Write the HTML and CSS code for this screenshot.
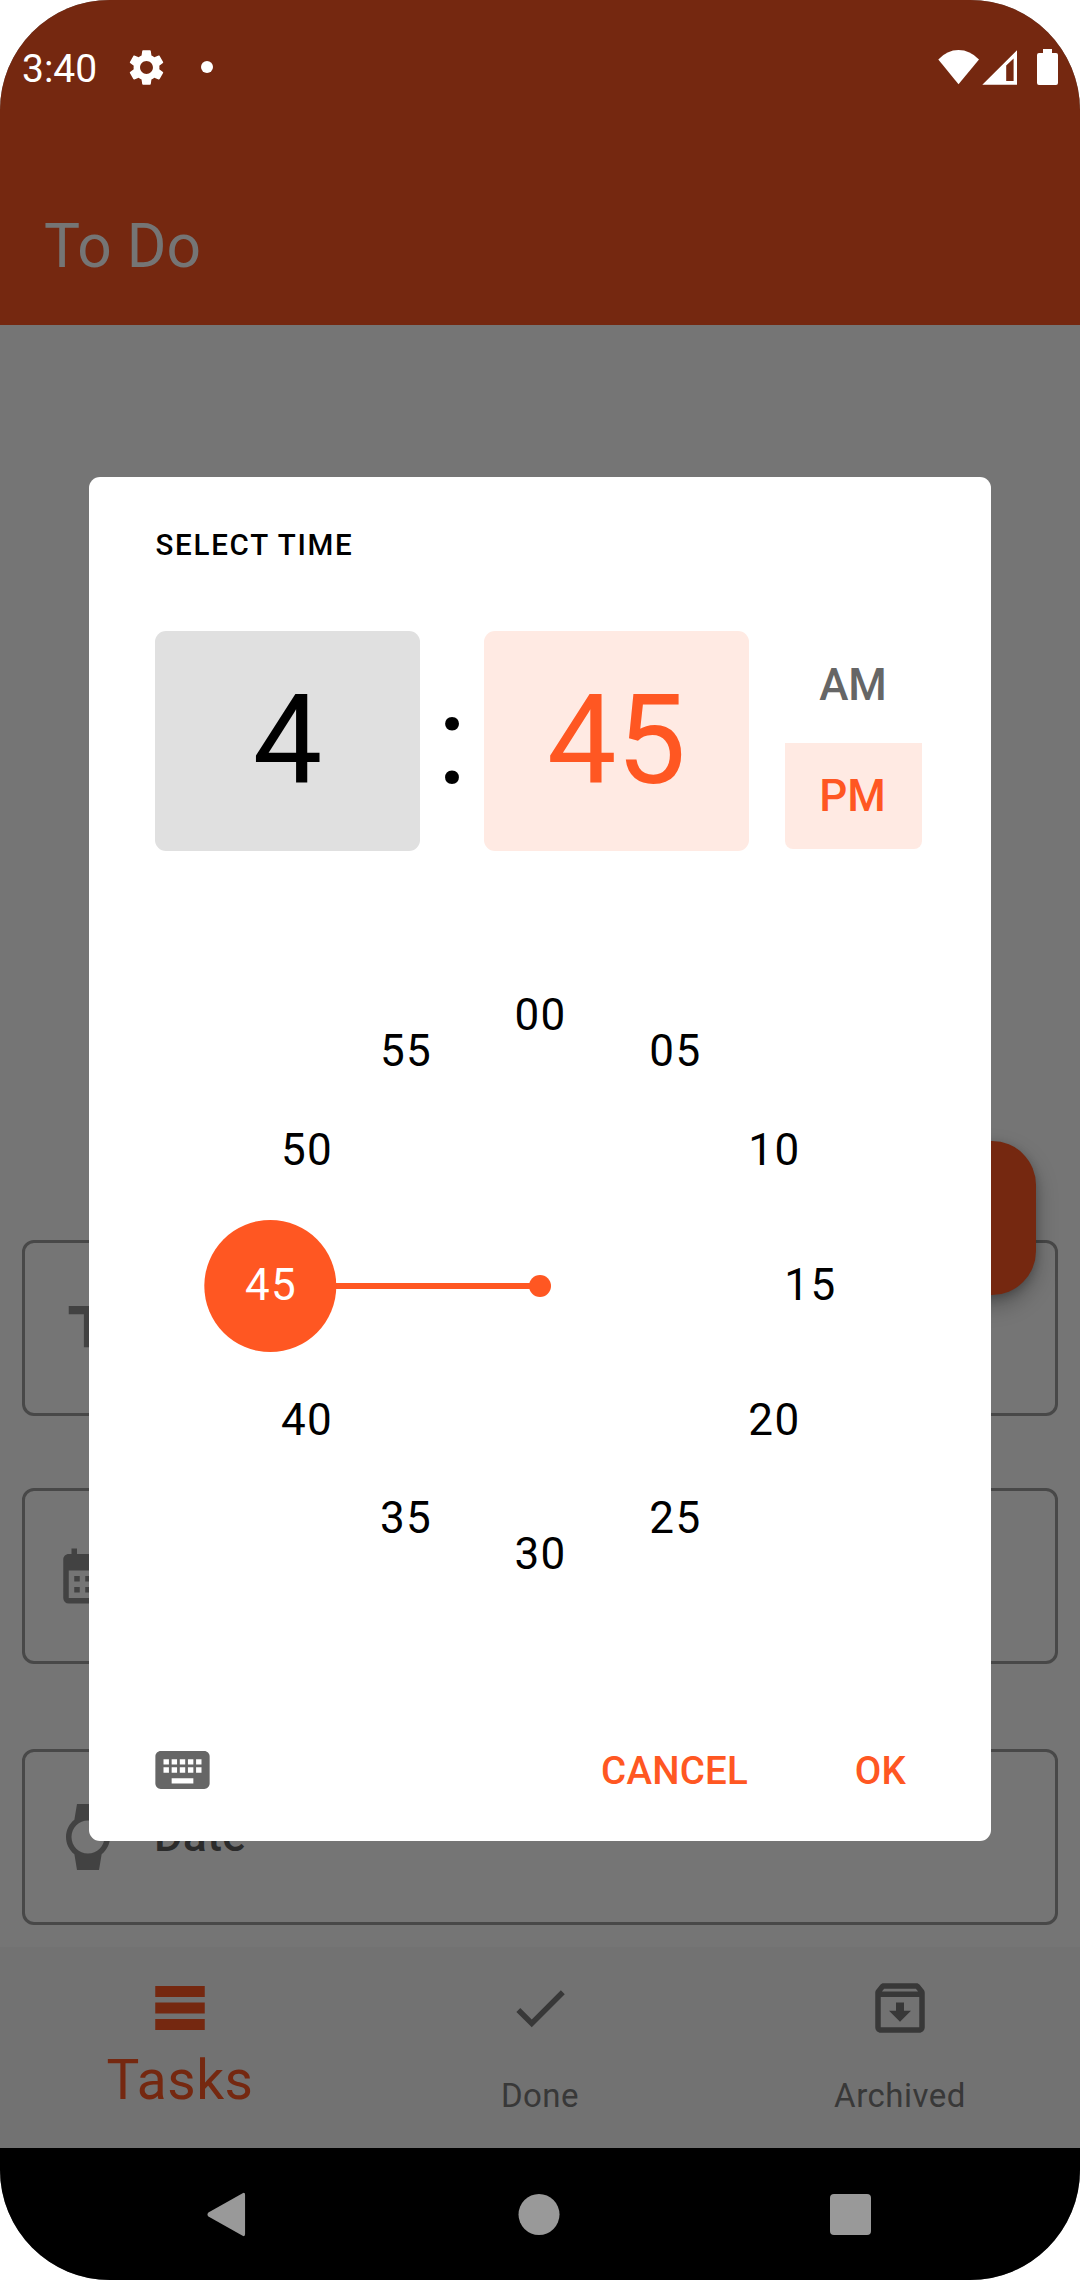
FILE: index.html
```html
<!DOCTYPE html>
<html lang="en">
<head>
<meta charset="utf-8">
<title>To Do</title>
<link rel="stylesheet" href="styles.css">
</head>
<body>
<div class="phone">
  <header class="app-header">
    <div class="status-bar">
      <div class="status-left">
        <span class="clock">3:40</span>
        <svg class="gear" viewBox="0 0 24 24"><path d="M19.14 12.94c.04-.3.06-.61.06-.94 0-.32-.02-.64-.07-.94l2.03-1.58c.18-.14.23-.41.12-.61l-1.92-3.32c-.12-.22-.37-.29-.59-.22l-2.39.96c-.5-.38-1.03-.7-1.62-.94l-.36-2.54c-.04-.24-.24-.41-.48-.41h-3.84c-.24 0-.43.17-.47.41l-.36 2.54c-.59.24-1.13.57-1.62.94l-2.39-.96c-.22-.08-.47 0-.59.22L2.74 8.87c-.12.21-.08.47.12.61l2.03 1.58c-.05.3-.09.63-.09.94s.02.64.07.94l-2.03 1.58c-.18.14-.23.41-.12.61l1.92 3.32c.12.22.37.29.59.22l2.39-.96c.5.38 1.03.7 1.62.94l.36 2.54c.05.24.24.41.48.41h3.84c.24 0 .44-.17.47-.41l.36-2.54c.59-.24 1.13-.56 1.62-.94l2.39.96c.22.08.47 0 .59-.22l1.92-3.32c.12-.22.07-.47-.12-.61l-2.01-1.58zM12 15.6c-1.98 0-3.6-1.62-3.6-3.6s1.62-3.6 3.6-3.6 3.6 1.62 3.6 3.6-1.62 3.6-3.6 3.6z"/></svg>
        <span class="dot"></span>
      </div>
      <svg class="status-right" viewBox="0 0 122 40">
        <path d="M0.3 12.5Q9 3 20.5 3T41 12.5L20.5 37.3Z"/>
        <path fill-rule="evenodd" d="M44.3 37.8L79 3.2V37.8ZM68.2 18.5V34H75.6V11.5Z"/>
        <path d="M101 6h4V2h9v4h4q2 0 2 2v28q0 2-2 2h-17q-2 0-2-2V8q0-2 2-2z"/>
      </svg>
    </div>
    <h1 class="title">To Do</h1>
  </header>

  <main class="sheet">
    <div class="fab"></div>
    <div class="field">
      <svg class="icon" viewBox="0 0 24 24"><path d="M5 4v3h5.5v12h3V7H19V4z"/></svg>
    </div>
    <div class="field">
      <svg class="icon" viewBox="0 0 24 24"><path d="M19 4h-1V2h-2v2H8V2H6v2H5c-1.11 0-1.99.9-1.99 2L3 20a2 2 0 0 0 2 2h14c1.1 0 2-.9 2-2V6c0-1.1-.9-2-2-2zm0 16H5V10h14v10zM9 14H7v-2h2v2zm4 0h-2v-2h2v2zm4 0h-2v-2h2v2zm-8 4H7v-2h2v2zm4 0h-2v-2h2v2zm4 0h-2v-2h2v2z"/></svg>
    </div>
    <div class="field">
      <svg class="icon" viewBox="0 0 24 24"><path d="M20 12c0-2.54-1.19-4.81-3.04-6.27L16 0H8l-.95 5.73C5.19 7.19 4 9.45 4 12s1.19 4.81 3.05 6.27L8 24h8l.96-5.73C18.81 16.81 20 14.54 20 12zM6 12c0-3.31 2.69-6 6-6s6 2.69 6 6-2.69 6-6 6-6-2.69-6-6z"/></svg>
      <span class="field-label">Date</span>
    </div>
  </main>

  <nav class="tabs">
    <div class="tab active">
      <svg class="icon" viewBox="0 0 24 24"><path d="M3 4h18v4H3zM3 10h18v4H3zM3 16h18v4H3z"/></svg>
      <span>Tasks</span>
    </div>
    <div class="tab">
      <svg class="icon" viewBox="0 0 24 24"><path d="M9 16.17L4.83 12l-1.42 1.41L9 19 21 7l-1.41-1.41z"/></svg>
      <span>Done</span>
    </div>
    <div class="tab">
      <svg class="icon" viewBox="0 0 24 24"><path d="M20.54 5.23l-1.39-1.68C18.88 3.21 18.47 3 18 3H6c-.47 0-.88.21-1.16.55L3.46 5.23C3.17 5.57 3 6.02 3 6.5V19c0 1.1.9 2 2 2h14c1.1 0 2-.9 2-2V6.5c0-.48-.17-.93-.46-1.27zM6.24 5h11.52l.83 1H5.42l.82-1zM5 19V8h14v11H5zm8.45-9h-2.9v3H8l4 4 4-4h-2.55z"/></svg>
      <span>Archived</span>
    </div>
  </nav>

  <div class="system-nav">
    <svg viewBox="0 0 40 46"><path d="M36.5 1.2Q39 0 39 3V43Q39 46 36.5 44.8L1.5 25Q-.5 23 1.5 21Z"/></svg>
    <svg viewBox="0 0 40 40"><circle cx="20.5" cy="20" r="20"/></svg>
    <svg viewBox="0 0 41 41"><rect width="41" height="41" rx="4"/></svg>
  </div>

  <section class="dialog">
    <h2 class="dialog-title">SELECT TIME</h2>
    <div class="time-row">
      <div class="time-box">4</div>
      <div class="colon">:</div>
      <div class="time-box selected">45</div>
      <div class="period">
        <div class="period-option">AM</div>
        <div class="period-option selected">PM</div>
      </div>
    </div>
    <svg class="dial" viewBox="-330 -330 660 660">
      <line x1="-270" y1="0" x2="0" y2="0"/>
      <circle cx="0" cy="0" r="11"/>
      <circle cx="-269.7" cy="0" r="66"/>
      <g>
        <text x="0.5" y="-256">00</text>
        <text x="135.5" y="-220">05</text>
        <text x="234.5" y="-121">10</text>
        <text x="270.5" y="14">15</text>
        <text x="234.5" y="149">20</text>
        <text x="135.5" y="247">25</text>
        <text x="0.5" y="283">30</text>
        <text x="-134" y="247">35</text>
        <text x="-233" y="149">40</text>
        <text x="-269" y="14" class="picked">45</text>
        <text x="-233" y="-121">50</text>
        <text x="-134" y="-220">55</text>
      </g>
    </svg>
    <div class="actions">
      <svg class="keyboard" viewBox="2 5 20 14"><path d="M20 5H4c-1.1 0-1.99.9-1.99 2L2 17c0 1.1.9 2 2 2h16c1.1 0 2-.9 2-2V7c0-1.1-.9-2-2-2zm-9 3h2v2h-2V8zm0 3h2v2h-2v-2zM8 8h2v2H8V8zm0 3h2v2H8v-2zm-1 2H5v-2h2v2zm0-3H5V8h2v2zm9 7H8v-2h8v2zm0-4h-2v-2h2v2zm0-3h-2V8h2v2zm3 3h-2v-2h2v2zm0-3h-2V8h2v2z"/></svg>
      <span class="action">CANCEL</span>
      <span class="action ok">OK</span>
    </div>
  </section>
</div>
</body>
</html>
```
FILE: styles.css
```css
* { box-sizing: border-box; margin: 0; padding: 0; }

body {
  background: #fff;
  font-family: Roboto, "Liberation Sans", sans-serif;
}

svg { display: block; }

.phone {
  position: relative;
  display: flex;
  flex-direction: column;
  width: 1080px;
  height: 2280px;
  border-radius: 110px;
  overflow: hidden;
  background: #757575;
}

.app-header {
  height: 325px;
  background: #752810;
}

.status-bar {
  display: flex;
  justify-content: space-between;
  align-items: center;
  height: 134px;
  padding: 0 20px 0 22px;
}

.status-left { display: flex; align-items: center; }

.clock {
  color: #fff;
  font-size: 39px;
  line-height: 44px;
  width: 103px;
  padding-top: 4px;
}

.gear { width: 43px; height: 43px; fill: #fff; }

.dot {
  width: 12px;
  height: 12px;
  margin-left: 33px;
  border-radius: 50%;
  background: #fff;
}

.status-right {
  width: 122px;
  height: 40px;
  fill: #fff;
}

.title {
  padding: 77px 44px 0;
  font-size: 60.5px;
  line-height: 71px;
  font-weight: 400;
  color: #757575;
}

.sheet {
  position: relative;
  display: flex;
  flex-direction: column;
  height: 1622px;
  padding: 915px 22px 0;
}

.field {
  display: flex;
  align-items: center;
  height: 176px;
  margin-bottom: 72px;
  padding-left: 30px;
  border: 3px solid #484848;
  border-radius: 12px;
}

.field:last-child { margin: 13px 0 0; }

.icon { width: 66px; height: 66px; fill: #424242; }

.field-label {
  margin-left: 33px;
  font-size: 44px;
  font-weight: 500;
  letter-spacing: 0.4px;
  line-height: 48px;
  margin-top: -2px;
  color: #2b2b2b;
}

.fab {
  position: absolute;
  left: 882px;
  top: 816px;
  width: 154px;
  height: 154px;
  border-radius: 44px;
  background: #752810;
  box-shadow: 0 10px 22px rgba(0, 0, 0, 0.28), 0 3px 10px rgba(0, 0, 0, 0.2);
}

.tabs {
  display: flex;
  height: 201px;
  background: #727272;
}

.tab {
  display: flex;
  flex: 1;
  flex-direction: column;
  align-items: center;
  padding-top: 28px;
  font-size: 33px;
  line-height: 40px;
  letter-spacing: 0.5px;
  color: #383838;
}

.tab .icon { fill: #383838; }
.tab span { margin-top: 35px; }

.tab.active { font-size: 55px; line-height: 64px; color: #752810; }
.tab.active .icon { fill: #752810; }
.tab.active span { margin-top: 7px; }

.system-nav {
  display: flex;
  height: 132px;
  padding: 0 209px 0 206px;
  justify-content: space-between;
  align-items: center;
  background: #000;
  fill: #999;
}

.system-nav svg { width: 41px; height: 45px; overflow: visible; }

.dialog {
  position: absolute;
  left: 89px;
  top: 477px;
  width: 902px;
  height: 1364px;
  padding: 51px 66px 0;
  border-radius: 11px;
  background: #fff;
}

.dialog-title {
  padding-left: 0.5px;
  font-size: 29.5px;
  line-height: 35px;
  font-weight: 500;
  letter-spacing: 1.75px;
}

.time-row {
  display: flex;
  margin-top: 68px;
  height: 220px;
}

.time-box {
  width: 265px;
  border-radius: 11px;
  background: #e0e0e0;
  font-size: 123.75px;
  line-height: 219px;
  text-align: center;
}

.time-box.selected,
.period-option.selected { background: #ffeae3; color: #ff5722; }

.colon {
  width: 64px;
  font-size: 123.75px;
  line-height: 219px;
  text-align: center;
}

.period {
  display: flex;
  flex-direction: column;
  gap: 6px;
  width: 137px;
  height: 218px;
  margin-left: 36px;
}

.period-option {
  flex: 1;
  min-height: 0;
  padding-right: 1px;
  border-radius: 0 0 8px 8px;
  font-size: 44px;
  line-height: 108px;
  font-weight: 500;
  text-align: center;
  color: #666;
}

.period-option.selected { line-height: 107px; padding-right: 2px; }

.dial {
  width: 660px;
  height: 660px;
  margin: 105px 0 0 55px;
  overflow: visible;
  fill: #ff5722;
}

.dial line { stroke: #ff5722; stroke-width: 6; }

.dial text {
  font-size: 44px;
  letter-spacing: 1.4px;
  text-anchor: middle;
  fill: #000;
}

.dial .picked { fill: #fff; }

.actions {
  display: flex;
  align-items: center;
  margin-top: 132px;
  height: 44px;
}

.keyboard { width: 55px; height: 38px; margin-right: 391px; fill: #666; }

.action {
  padding-top: 2px;
  font-size: 38.5px;
  font-weight: 500;
  line-height: 44px;
  letter-spacing: 0.25px;
  color: #ff5722;
}

.action.ok { margin-left: auto; margin-right: 19px; }
```
